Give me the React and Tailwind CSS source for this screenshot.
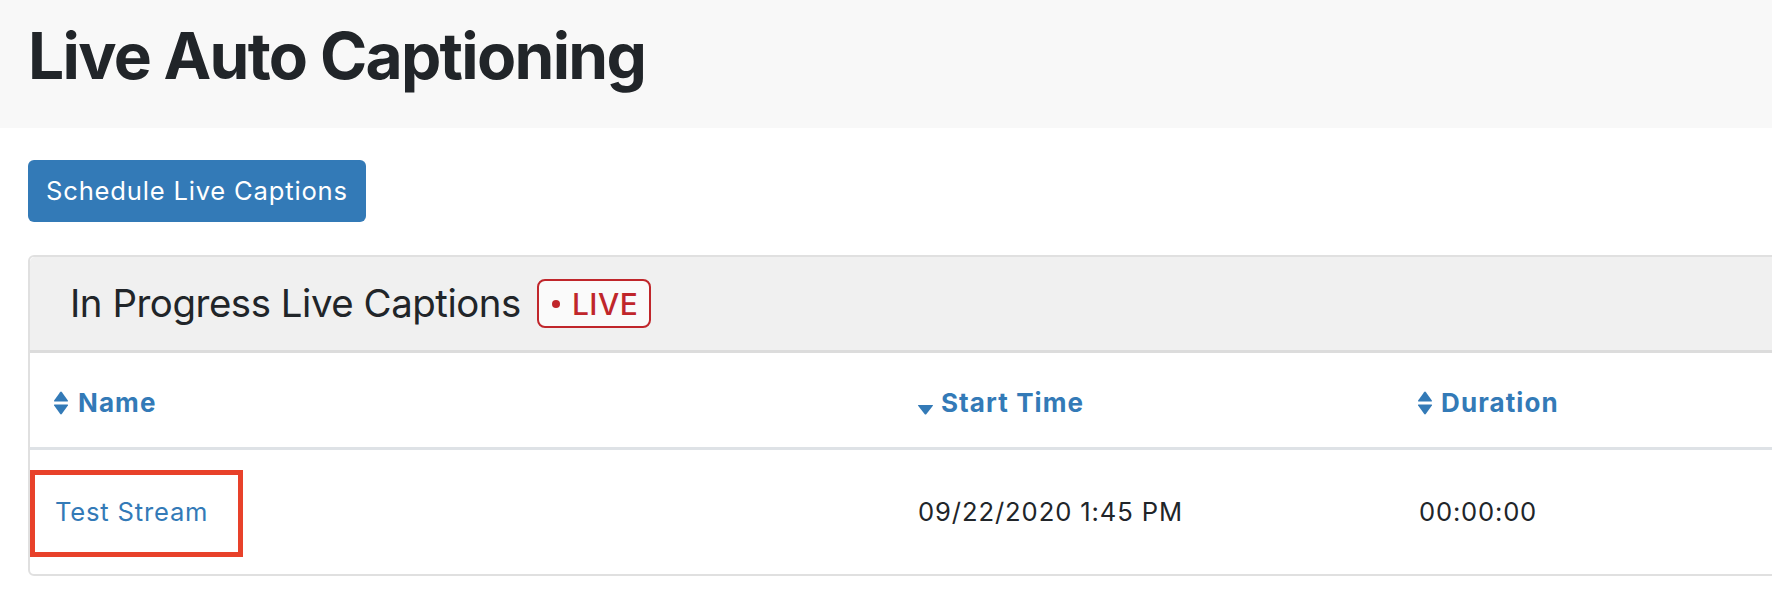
import React from "react";

function SortBoth() {
  return (
    <svg width="16" height="24" viewBox="0 0 15 23" className="shrink-0" aria-hidden="true">
      <path d="M0.9 9.1 L6.6 1.1 Q7.5 0 8.4 1.1 L14.1 9.1 Q14.6 10 13.6 10 L1.4 10 Q0.4 10 0.9 9.1 Z" fill="#337ab7" />
      <path d="M0.9 13.9 L6.6 21.9 Q7.5 23 8.4 21.9 L14.1 13.9 Q14.6 13 13.6 13 L1.4 13 Q0.4 13 0.9 13.9 Z" fill="#337ab7" />
    </svg>
  );
}

function SortDesc() {
  return (
    <svg width="17" height="24" viewBox="0 0 16 23" className="shrink-0" aria-hidden="true">
      <path d="M0.9 14.2 L7.1 22 Q8 23 8.9 22 L15.1 14.2 Q15.6 13.4 14.6 13.4 L1.4 13.4 Q0.4 13.4 0.9 14.2 Z" fill="#337ab7" />
    </svg>
  );
}

export default function App() {
  return (
    <div
      className="w-full min-h-[602px] overflow-hidden bg-white text-[#212529]"
      style={{ fontFamily: 'Inter, "Noto Sans", "Liberation Sans", sans-serif' }}
    >
      <header className="h-[128px] bg-[#f8f8f8] pl-[28px] pt-[18px]">
        <h1 className="text-[64px] font-bold leading-[1.2] tracking-[-1.7px] text-[#212529]">
          Live Auto Captioning
        </h1>
      </header>

      <div className="pl-[28px] pt-[32px]">
        <button className="h-[62px] rounded-[6px] bg-[#337ab7] px-[18px] text-[25.6px] leading-none tracking-[0.8px] text-white">
          Schedule Live Captions
        </button>
      </div>

      <div className="ml-[28px] mt-[33px] w-[1800px] rounded-[6px] border-2 border-[#e0e0e0] bg-white">
        <div className="flex h-[96px] items-center gap-[16px] rounded-t-[5px] border-b-[3px] border-[#dcdcdc] bg-[#f0f0f0] pl-[40px]">
          <h4 className="text-[38.4px] font-normal leading-[1.2] tracking-[-0.45px] text-[#212529]">
            In Progress Live Captions
          </h4>
          <span className="flex h-[49px] items-center gap-[12px] rounded-[8px] border-2 border-[#c0262b] bg-[#fafafa] pl-[13px] pr-[11px] text-[30px] font-medium leading-none tracking-[0.5px] text-[#c0262b]">
            <span className="block h-[8px] w-[8px] rounded-full bg-[#c0262b]" />
            LIVE
          </span>
        </div>

        <div className="grid grid-cols-[864px_500px_1fr] border-b-[3px] border-[#dee2e6]">
          <div className="flex h-[94px] items-center gap-[9px] pl-[23px] pt-[6px]">
            <SortBoth />
            <span className="text-[26px] font-bold leading-none tracking-[1.1px] text-[#337ab7]">Name</span>
          </div>
          <div className="flex h-[94px] items-center gap-[7px] pl-[23px] pt-[6px]">
            <SortDesc />
            <span className="text-[26px] font-bold leading-none tracking-[1.1px] text-[#337ab7]">Start Time</span>
          </div>
          <div className="flex h-[94px] items-center gap-[8px] pl-[23px] pt-[6px]">
            <SortBoth />
            <span className="text-[26px] font-bold leading-none tracking-[1.1px] text-[#337ab7]">Duration</span>
          </div>
        </div>

        <div className="grid h-[124px] grid-cols-[864px_500px_1fr] items-center">
          <div className="relative flex h-full items-center pl-[25px]">
            <a className="text-[25.6px] leading-none tracking-[0.8px] text-[#337ab7]" href="#">
              Test Stream
            </a>
            <span className="pointer-events-none absolute left-0 top-[20px] h-[87px] w-[213px] border-[5px] border-[#e8412a]" />
          </div>
          <div className="pl-[24px] text-[25.6px] leading-none tracking-[0.9px] text-[#212529]">09/22/2020 1:45 PM</div>
          <div className="pl-[25px] text-[25.6px] leading-none tracking-[0.8px] text-[#212529]">00:00:00</div>
        </div>
      </div>
    </div>
  );
}
